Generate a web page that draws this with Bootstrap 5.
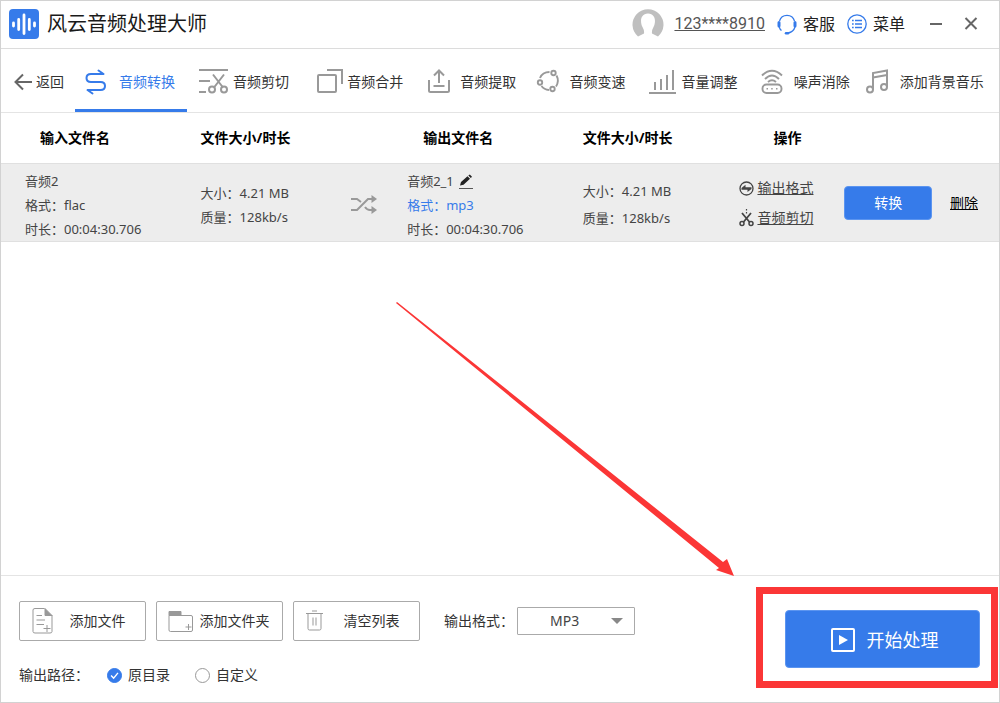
<!DOCTYPE html>
<html lang="zh-CN">
<head>
<meta charset="utf-8">
<meta name="viewport" content="width=device-width, initial-scale=1">
<title>风云音频处理大师</title>
<link href="https://cdn.jsdelivr.net/npm/bootstrap@5.3.0/dist/css/bootstrap.min.css" rel="stylesheet">
<style>
  :root { --brand: #367bea; --ink: #333; --rule: #e4e4e4; --icon: #999; --alert: #fb3636; }
  body { font: 14px/20px "Noto Sans", "Noto Sans CJK SC", sans-serif; color: var(--ink); background: #fff; }
  svg { flex: none; fill: none; }
  a { color: inherit; }
  .app-window { border: 1px solid #d2d2d2; }
  .title-bar { height: 48px; border-bottom: 1px solid #dcdcdc; padding: 0 20px 2px 8px; }
  .app-name { font-size: 20px; line-height: 28px; color: #1a1a1a; font-weight: 400; }
  .account { font: 16px/24px Roboto, sans-serif; color: #555; margin-left: 10px; }
  .title-link { font-size: 16px; line-height: 24px; color: #222; gap: 6px; }
  .plain-btn { background: none; border: 0; padding: 0; color: inherit; line-height: 0; }

  .tool-bar { height: 64px; border-bottom: 1px solid var(--rule); }
  .back-link { width: 74px; padding: 2px 0 0 12px; gap: 3px; }
  .tabs { display: grid; grid-template-columns: 114fr 114fr 113fr 109fr 112fr 112fr 106fr 143fr; }
  .tab-link { gap: 4px; padding: 5px 0 0 8px; margin-right: 2px; border-bottom: 3px solid transparent; white-space: nowrap; }
  .tab-link svg { stroke: var(--icon); stroke-width: 2; }
  .tab-link.active { color: var(--brand); border-bottom-color: var(--brand); }
  .tab-link.active svg { stroke: var(--brand); }

  .file-table { table-layout: fixed; font-size: 13px; line-height: 24px; }
  .file-table th { font-size: 14px; height: 50px; padding: 0; color: #000; vertical-align: middle; }
  .file-table td { padding: 2px 0 0; height: 78px; vertical-align: middle; color: #444; }
  .file-table tbody tr { background: #ededed; border-top: 1px solid #e0e0e0; border-bottom: 1px solid #e0e0e0; }
  .file-table .text-cell { padding-top: 5px; }
  .file-table .size-cell { line-height: 27px; padding-top: 6px; }
  .in-name { padding-left: 24px !important; }
  .in-head { padding-left: 39px !important; }
  .out-head { padding-left: 16px !important; }
  .op-head { padding-left: 34px !important; }
  .op-link { font-size: 14px; line-height: 30px; gap: 3px; color: #444; }
  .accent { color: var(--brand); }
  .btn-brand { --bs-btn-bg: var(--brand); --bs-btn-color: #fff; --bs-btn-border-color: #5c95f0; --bs-btn-hover-bg: #2468d8; --bs-btn-hover-color: #fff; --bs-btn-border-radius: 4px; }
  .convert-btn { width: 88px; height: 34px; font-size: 14px; line-height: 20px; padding: 0; }
  .delete-link { font-size: 14px; color: #000; }

  .pointer { right: 264px; bottom: -1px; pointer-events: none; z-index: 1; }

  .action-bar { border-top: 1px solid var(--rule); padding-left: 18px; height: 127px; }
  .file-actions { gap: 10px; padding-top: 25px; }
  .file-btn { width: 127px; height: 40px; padding: 0 6px 0 8px; font-size: 14px; line-height: 20px; border: 1px solid #aaa; border-radius: 2px; background: #fff; color: var(--ink); }
  .file-btn svg { width: 28px; stroke: var(--icon); }
  .file-btn span { flex: 1; text-align: center; }
  .format-field { gap: 3px; margin-left: 14px; }
  .format-select { width: 118px; height: 28px; padding: 0 32px 0 32px; font-size: 14px; line-height: 26px; border: 1px solid #aaa; border-radius: 1px; color: #444;
    background-image: url("data:image/svg+xml,%3Csvg xmlns='http://www.w3.org/2000/svg' viewBox='0 0 12 6'%3E%3Cpath d='M0 0h12L6 6z' fill='%23888'/%3E%3C/svg%3E"); background-size: 12px 6px; background-position: right 11px center; }
  .path-choice { gap: 6px; margin-left: 18px; }
  .path-choice + .path-choice { margin-left: 25px; }
  .path-radio.form-check-input { width: 15px; height: 15px; margin: 0; border-color: #999; }
  .path-radio.form-check-input:checked { background-color: var(--brand); border-color: var(--brand);
    background-image: url("data:image/svg+xml,%3Csvg xmlns='http://www.w3.org/2000/svg' viewBox='0 0 15 15'%3E%3Cpath d='M3.5 7.5l3 3 5-6' fill='none' stroke='%23fff' stroke-width='1.6'/%3E%3C/svg%3E"); }
  .start-frame { border: 7px solid var(--alert); padding: 16px 11px 13px 22px; margin: 11px 1px 0 0; }
  .start-btn { width: 195px; height: 58px; padding: 2px 0 0 4px; font-size: 18px; line-height: 26px; gap: 12px; }
</style>
</head>
<body>
<div class="app-window d-flex flex-column min-vh-100">
  <header class="title-bar d-flex align-items-center">
    <svg width="30" height="30" viewBox="0 0 30 30" aria-hidden="true"><rect width="30" height="30" rx="4" fill="#367bea"/><path d="M4.500 14v3M9.700 10.500v10M15 6v18.500M20.300 10.500v10M25.500 14v3" stroke="#fff" stroke-width="2.800" stroke-linecap="round"/></svg>
    <h1 class="app-name ms-2 mb-0">风云音频处理大师</h1>
    <div class="d-flex align-items-center ms-auto">
      <svg width="32" height="32" viewBox="0 0 32 32" aria-hidden="true"><path d="M6 28.500A15.500 15.500 0 1 1 26 28.500L20 25.500Q19.500 22.500 21.500 19C24 14 24 6 16 5.500C8 6 8 14 10.500 19Q12.500 22.500 12 25.500Z" fill="#bfbfbf"/></svg>
      <a class="account" href="#">123****8910</a>
      <a class="title-link d-flex align-items-center text-decoration-none ms-2 ps-1" href="#">
        <svg width="20" height="22" viewBox="0 0 20 22" aria-hidden="true"><g stroke="#367bea"><path d="M2.500 8A7.800 7.800 0 0 1 17.500 8M18 14Q16.500 19 11 20" stroke-width="1.300"/><path d="M2 9.500v3.500M18 9.500v3.500" stroke-width="3" stroke-linecap="round"/><path d="M2.200 14Q3 16.500 4.500 17.500" stroke-width="1.300"/><path d="M9 20.200h2" stroke-width="2.500" stroke-linecap="round"/></g></svg>客服</a>
      <a class="title-link d-flex align-items-center text-decoration-none ms-2 ps-1" href="#">
        <svg width="20" height="20" viewBox="0 0 20 20" aria-hidden="true"><g stroke="#367bea"><circle cx="10" cy="10" r="9.200" stroke-width="1.300"/><path d="M5 6.500h1.700M5 10h1.700M5 13.500h1.700M8 6.500h7M8 10h7M8 13.500h7" stroke-width="1.700"/></g></svg>菜单</a>
      <button class="plain-btn ms-4" aria-label="最小化"><svg width="14" height="14" viewBox="0 0 14 14"><path d="M1 7h12" stroke="#666" stroke-width="2"/></svg></button>
      <button class="plain-btn ms-3 ps-1" aria-label="关闭"><svg width="16" height="16" viewBox="0 0 16 16"><path d="M2.500 2l11 11M13.500 2l-11 11" stroke="#666" stroke-width="2"/></svg></button>
    </div>
  </header>

  <nav class="tool-bar d-flex">
    <a class="back-link d-flex align-items-center text-decoration-none text-nowrap" href="#">
      <svg width="20" height="18" viewBox="0 0 20 18" aria-hidden="true"><path d="M19 9H3M10 1.500L2.500 9L10 16.500" stroke="#666" stroke-width="2"/></svg>返回</a>
    <div class="tabs flex-grow-1">
      <a class="tab-link active d-flex align-items-center text-decoration-none" href="#" aria-current="page">
        <svg width="32" height="32" viewBox="0 0 32 32" aria-hidden="true"><path d="M20.500 8H8Q3.500 8 3.500 12T8 16H17.500Q22 16 22 20T17.500 24H5M15.500 4.500L20.500 8M9.500 27.500L4.500 24" stroke-linecap="round"/></svg>音频转换</a>
      <a class="tab-link d-flex align-items-center text-decoration-none" href="#">
        <svg width="32" height="32" viewBox="0 0 32 32" aria-hidden="true"><g><path d="M2 4H31M2 15H13M2 26H9M16 8.500L26 21.500M27 8.500L17 21.500"/><circle cx="15" cy="23.500" r="3"/><circle cx="27" cy="23.500" r="3"/></g></svg>音频剪切</a>
      <a class="tab-link d-flex align-items-center text-decoration-none" href="#">
        <svg width="32" height="32" viewBox="0 0 32 32" aria-hidden="true"><g><rect x="7" y="9" width="18" height="17" rx="1"/><path d="M16 4H31V18"/></g></svg>音频合并</a>
      <a class="tab-link d-flex align-items-center text-decoration-none" href="#">
        <svg width="32" height="32" viewBox="0 0 32 32" aria-hidden="true"><g><path d="M5 14V24.500Q5 26 6.500 26H23.500Q25 26 25 24.500V14M9.500 20H20.500M15 17V4.500M10 9.500L15 4.500L20 9.500"/></g></svg>音频提取</a>
      <a class="tab-link d-flex align-items-center text-decoration-none" href="#">
        <svg width="32" height="32" viewBox="0 0 32 32" aria-hidden="true"><g stroke-width="1.900"><circle cx="20.500" cy="7" r="2.200"/><circle cx="7" cy="16.500" r="2.200"/><circle cx="19.500" cy="23" r="2.200"/><path d="M7 12Q9.500 6 16.500 6M23.500 9.500Q26.500 15 23 20.500M8.500 20Q11 23.500 16 24"/></g></svg>音频变速</a>
      <a class="tab-link d-flex align-items-center text-decoration-none" href="#">
        <svg width="32" height="32" viewBox="0 0 32 32" aria-hidden="true"><g><path d="M3 27H30M9 24V16M15 24V13M21 24V9M27 24V4"/></g></svg>音量调整</a>
      <a class="tab-link d-flex align-items-center text-decoration-none" href="#">
        <svg width="32" height="32" viewBox="0 0 32 32" aria-hidden="true"><g stroke-width="1.900"><path d="M4 9.500Q14 0 24 9.500M7 13Q14 6 21 13M10 16Q14 12.500 18 16"/><rect x="4.500" y="18.500" width="19" height="8.500" rx="4"/><path d="M8.500 22.700h1.500M13.200 22.700h1.500M18 22.700h1.500" stroke-width="1.500"/></g></svg>噪声消除</a>
      <a class="tab-link d-flex align-items-center text-decoration-none" href="#">
        <svg width="32" height="32" viewBox="0 0 32 32" aria-hidden="true"><g><circle cx="6" cy="23.500" r="3"/><circle cx="20" cy="21" r="3"/><path d="M9 23.500V7L23 4.500V21M9 11.500L23 9"/></g></svg>添加背景音乐</a>
    </div>
  </nav>

  <main class="flex-grow-1 position-relative">
    <table class="file-table w-100">
      <colgroup><col style="width:20%"><col style="width:15%"><col style="width:5.700%"><col style="width:17.600%"><col style="width:15.700%"><col style="width:10.500%"><col style="width:10.600%"><col></colgroup>
      <thead>
        <tr><th class="in-head">输入文件名</th><th colspan="2">文件大小/时长</th><th class="out-head">输出文件名</th><th>文件大小/时长</th><th class="op-head" colspan="3">操作</th></tr>
      </thead>
      <tbody>
        <tr>
          <td class="text-cell in-name">音频2<br>格式：flac<br>时长：00:04:30.706</td>
          <td class="text-cell">大小：4.21 MB<br>质量：128kb/s</td>
          <td><svg width="28" height="20" viewBox="0 0 28 20" aria-hidden="true"><path d="M1 4H7L11 7M1 15H7L18 4H23M15 12Q17 15 20 15H23" stroke="#999" stroke-width="2"/><path d="M21.500 0L27 4L21.500 8ZM21.500 11L27 15L21.500 19Z" fill="#999"/></svg></td>
          <td class="text-cell">音频2_1
            <button class="plain-btn" aria-label="重命名"><svg width="16" height="16" viewBox="0 0 16 16"><path d="M3 11.500L4 8L10.500 2.200L13 4.800L6.500 10.700ZM11.300 1.500L12.800 .400L15 2.700L13.800 4Z" fill="#222"/><path d="M2 14.500H16" stroke="#555"/></svg></button><br>
            <span class="accent">格式：mp3</span><br>时长：00:04:30.706</td>
          <td class="size-cell">大小：4.21 MB<br>质量：128kb/s</td>
          <td>
            <a class="op-link d-flex align-items-center" href="#"><svg width="15" height="15" viewBox="0 0 15 15" aria-hidden="true"><circle cx="7.500" cy="7.500" r="6.500" stroke="#444" stroke-width="1.300"/><path d="M2.500 7L6.500 3.800V6.300H12.500V8L8.500 11V8.700H2.500Z" fill="#444"/></svg>输出格式</a>
            <a class="op-link d-flex align-items-center" href="#"><svg width="15" height="18" viewBox="0 0 15 18" aria-hidden="true"><path d="M7.500 0v1.500M7.500 3v1.500" stroke="#444" stroke-width="1.200"/><path d="M3 4L10.500 13M12 4L4.500 13" stroke="#444" stroke-width="1.800"/><g stroke="#444" stroke-width="1.500"><circle cx="3" cy="14.500" r="2"/><circle cx="12" cy="14.500" r="2"/></g></svg>音频剪切</a>
          </td>
          <td><button class="btn btn-brand convert-btn">转换</button></td>
          <td><a class="delete-link" href="#">删除</a></td>
        </tr>
      </tbody>
    </table>
    <svg class="pointer position-absolute" width="340" height="275" viewBox="0 0 340 275" aria-hidden="true"><path d="M1 2L2 1L328 261L332 258L339 275L321 269L324 267Z" fill="#fb3636"/></svg>
  </main>

  <footer class="action-bar d-flex justify-content-between">
    <div>
      <div class="file-actions d-flex align-items-center">
        <button class="file-btn d-flex align-items-center"><svg height="28" viewBox="0 0 28 28" aria-hidden="true"><path d="M16.500 1.500H7Q5 1.500 5 3V24.500Q5 26 7 26H22Q24 26 24 24.500V8M8.500 8.500H14M8.500 13H17M8.500 17.500H16M19 18V25M15.500 21.500H22.500"/><path d="M17 1.500L24 8.500H17Z" fill="#999"/></svg><span>添加文件</span></button>
        <button class="file-btn d-flex align-items-center"><svg height="28" viewBox="0 0 28 28" aria-hidden="true"><path d="M4 4.500H16V8.500H4Z" fill="#999"/><path d="M4 8.500H26Q27.500 8.500 27.500 10V23Q27.500 24.500 26 24.500H5.500Q4 24.500 4 23Z" /><path d="M23.500 17V23M20.500 20H26.500"/></svg><span>添加文件夹</span></button>
        <button class="file-btn d-flex align-items-center"><svg height="28" viewBox="0 0 28 28" aria-hidden="true"><path d="M4 6.500H21M10 4H15M6 6.500V21.500Q6 23 7.500 23H17.500Q19 23 19 21.500V6.500M11 10.500V18.500M14 10.500V18.500"/></svg><span>清空列表</span></button>
        <div class="format-field d-flex align-items-center">
          <label class="text-nowrap" for="format">输出格式：</label>
          <select class="form-select format-select" id="format"><option>MP3</option><option>FLAC</option><option>WAV</option></select>
        </div>
      </div>
      <div class="d-flex align-items-center mt-4" role="radiogroup" aria-labelledby="path-title">
        <span id="path-title">输出路径：</span>
        <div class="path-choice d-flex align-items-center">
          <input class="form-check-input path-radio" type="radio" name="path" id="path-source" checked>
          <label for="path-source">原目录</label>
        </div>
        <div class="path-choice d-flex align-items-center">
          <input class="form-check-input path-radio" type="radio" name="path" id="path-custom">
          <label for="path-custom">自定义</label>
        </div>
      </div>
    </div>
    <div class="start-frame align-self-start">
      <button class="btn btn-brand start-btn d-flex align-items-center justify-content-center"><svg width="24" height="24" viewBox="0 0 24 24" aria-hidden="true"><rect x="1" y="1" width="22" height="22" rx="1" stroke="#fff" stroke-width="2"/><path d="M8 7L17 12L8 17Z" fill="#fff"/></svg>开始处理</button>
    </div>
  </footer>
</div>
<script src="https://cdn.jsdelivr.net/npm/bootstrap@5.3.0/dist/js/bootstrap.bundle.min.js"></script>
</body>
</html>
